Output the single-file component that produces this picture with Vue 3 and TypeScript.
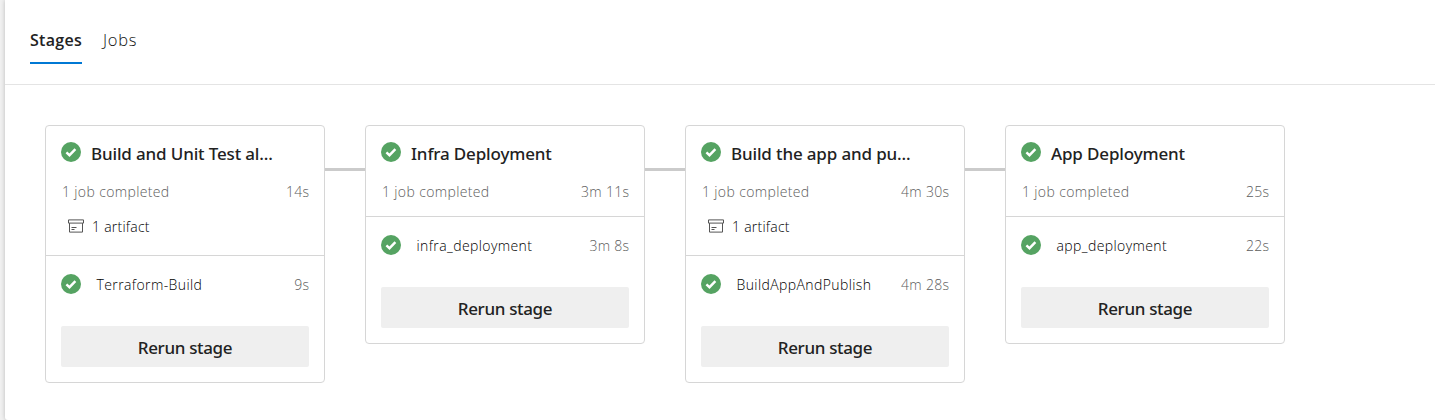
<script setup lang="ts">
interface Stage {
  title: string
  duration: string
  artifacts?: string
  job: string
  jobDuration: string
}

const stages: Stage[] = [
  { title: 'Build and Unit Test al...', duration: '14s', artifacts: '1 artifact', job: 'Terraform-Build', jobDuration: '9s' },
  { title: 'Infra Deployment', duration: '3m 11s', job: 'infra_deployment', jobDuration: '3m 8s' },
  { title: 'Build the app and pu...', duration: '4m 30s', artifacts: '1 artifact', job: 'BuildAppAndPublish', jobDuration: '4m 28s' },
  { title: 'App Deployment', duration: '25s', job: 'app_deployment', jobDuration: '22s' },
]
</script>

<template>
  <div class="page">
    <main class="panel">
      <nav class="tabs">
        <a class="tab active">Stages</a>
        <a class="tab">Jobs</a>
      </nav>
      <section class="stages">
        <template v-for="(stage, index) in stages" :key="stage.title">
          <div v-if="index > 0" class="connector"></div>
          <article class="card">
            <header class="card-header">
              <div class="title-row">
                <svg class="status" viewBox="0 0 20 20">
                  <circle cx="10" cy="10" r="10" />
                  <path d="M5.4 10.3 8.5 13.2 14.4 7.1" />
                </svg>
                <h2 class="title">{{ stage.title }}</h2>
              </div>
              <div class="summary">
                <span>1 job completed</span>
                <span class="time">{{ stage.duration }}</span>
              </div>
              <div v-if="stage.artifacts" class="artifact">
                <svg class="box" viewBox="0 0 16 14">
                  <path d="M.5 .9h15v3.2H.5zM1.5 4.1v9h13v-9M3.5 8.5h5M3.5 10.5h3" />
                </svg>
                <span>{{ stage.artifacts }}</span>
              </div>
            </header>
            <div class="job">
              <svg class="status" viewBox="0 0 20 20">
                <circle cx="10" cy="10" r="10" />
                <path d="M5.4 10.3 8.5 13.2 14.4 7.1" />
              </svg>
              <span class="job-name">{{ stage.job }}</span>
              <span class="time">{{ stage.jobDuration }}</span>
            </div>
            <button class="rerun" type="button">Rerun stage</button>
          </article>
        </template>
      </section>
    </main>
  </div>
</template>

<style>
body {
  margin: 0;
  overflow: hidden;
}
</style>

<style scoped>
.page {
  box-sizing: border-box;
  height: 420px;
  padding-left: 5px;
  overflow: hidden;
  background: #f0f0f0;
  color: #222;
  font-family: "Open Sans", "Noto Sans", sans-serif;
}
.panel {
  height: 420px;
  background: #fff;
  border-bottom-left-radius: 3px;
  box-shadow: 0 0 4px rgba(0, 0, 0, 0.22);
}
.tabs {
  box-sizing: border-box;
  display: flex;
  gap: 20px;
  height: 85px;
  padding: 16px 25px 0;
  border-bottom: 1px solid #e4e4e4;
}
.tab {
  box-sizing: border-box;
  height: 48px;
  color: #111;
  font-size: 16.5px;
  font-weight: 300;
  line-height: 48px;
  letter-spacing: 0.75px;
  text-indent: 1px;
  white-space: nowrap;
}
.tab.active {
  width: 52px;
  border-bottom: 2px solid #0078d4;
  color: #222;
  font-size: 16px;
  font-weight: 600;
  letter-spacing: 0.3px;
  text-indent: 0;
}
.stages {
  display: flex;
  align-items: flex-start;
  padding: 40px 40px 0;
}
.connector {
  flex: none;
  width: 40px;
  height: 3px;
  margin-top: 43px;
  background: #cbcbcb;
}
.card {
  box-sizing: border-box;
  flex: none;
  width: 280px;
  padding-bottom: 15px;
  border: 1px solid #d6d6d6;
  border-radius: 4px;
  background: #fff;
}
.card-header {
  padding: 16px 15px 13px;
  border-bottom: 1px solid #d6d6d6;
}
.title-row {
  display: flex;
  align-items: flex-start;
  gap: 10px;
  height: 39px;
}
.status {
  display: block;
  flex: none;
  width: 20px;
  height: 20px;
}
.status circle {
  fill: #55a362;
}
.status path {
  fill: none;
  stroke: #fff;
  stroke-width: 2.4;
}
.title {
  margin: 0;
  font-family: "Noto Sans", "Open Sans", sans-serif;
  font-size: 17px;
  font-weight: 500;
  line-height: 23px;
  letter-spacing: -0.15px;
  white-space: nowrap;
}
.summary {
  display: flex;
  justify-content: space-between;
  height: 22px;
  padding-left: 1px;
  color: #5c5c5c;
  font-size: 14px;
  font-weight: 300;
  line-height: 22px;
  letter-spacing: 0.36px;
}
.artifact {
  display: flex;
  align-items: center;
  gap: 8px;
  height: 22px;
  margin: 12px 0 5px;
  padding-left: 7px;
  color: #000;
  font-size: 14px;
  font-weight: 300;
  letter-spacing: 0.25px;
}
.box {
  display: block;
  width: 16px;
  height: 14px;
}
.box path {
  fill: none;
  stroke: #555;
  stroke-width: 1;
}
.job {
  display: flex;
  align-items: flex-start;
  height: 21px;
  padding: 18px 15px 0;
  color: #000;
  font-size: 14px;
  font-weight: 300;
  line-height: 22px;
  letter-spacing: 0.4px;
}
.job-name {
  flex: 1;
  padding-left: 15.5px;
  white-space: nowrap;
}
.time {
  margin-right: -0.4px;
  color: #5c5c5c;
  letter-spacing: 0.3px;
  white-space: nowrap;
}
.rerun {
  display: block;
  width: 248px;
  height: 41px;
  margin: 31px 15px 0;
  padding: 0;
  border: 0;
  border-radius: 2px;
  background: #efefef;
  color: #222;
  font-family: "Noto Sans", "Open Sans", sans-serif;
  font-size: 17px;
  font-weight: 500;
  line-height: 43px;
  letter-spacing: -0.35px;
}
</style>
